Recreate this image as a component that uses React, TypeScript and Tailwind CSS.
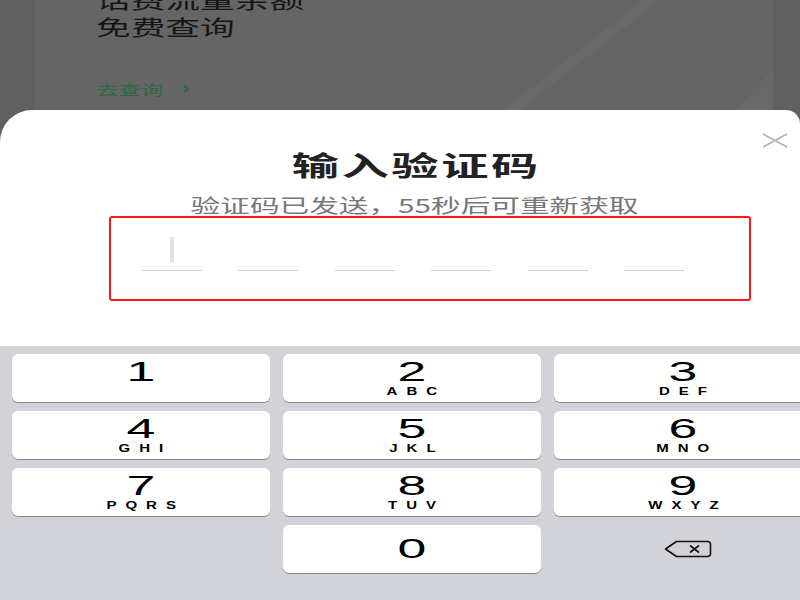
import React from "react";

const cjk = "font-['Noto_Sans_CJK_SC','Noto_Sans',sans-serif]";
const num = "font-['Liberation_Sans','Noto_Sans_CJK_SC',sans-serif]";

type K = { d: string; l?: string };
const rows: K[][] = [
  [{ d: "1" }, { d: "2", l: "ABC" }, { d: "3", l: "DEF" }],
  [{ d: "4", l: "GHI" }, { d: "5", l: "JKL" }, { d: "6", l: "MNO" }],
  [{ d: "7", l: "PQRS" }, { d: "8", l: "TUV" }, { d: "9", l: "WXYZ" }],
];

function Key({ k }: { k: K }) {
  return (
    <div className="h-[48px] bg-white rounded-[6px] shadow-[0_1px_0_#88898c] flex flex-col items-center pt-[4px]">
      <span className={`${num} inline-block text-[28px] leading-[28px] text-black scale-x-[1.85]`}>{k.d}</span>
      {k.l && (
        <span className={`${num} inline-block mt-[1px] text-[10px] leading-[10px] font-bold text-black tracking-[6px] pl-[6px] scale-x-[1.5]`}>
          {k.l}
        </span>
      )}
    </div>
  );
}

export default function App() {
  return (
    <div className="relative w-[800px] h-[600px] overflow-hidden bg-[#606060] flex flex-col">
      {/* dimmed background page */}
      <div className="h-[110px] shrink-0 flex">
        <div className="ml-[35px] w-[738px] h-full bg-[#656565] relative overflow-hidden">
          <svg className="absolute inset-0" width="738" height="110" viewBox="0 0 738 110">
            <polygon points="608,0 625,0 485,110 468,110" fill="#696969" />
            <polygon points="700,110 738,70 738,110" fill="#696969" />
          </svg>
          <div className={`relative ${cjk} pl-[61px] -mt-[14px] flex flex-col items-start`}>
            <span className="inline-block origin-left scale-x-[1.65] text-[21px] leading-[27px] text-[#161616]">话费流量余额</span>
            <span className="inline-block origin-left scale-x-[1.65] text-[21px] leading-[27px] text-[#161616]">免费查询</span>
            <div className="mt-[39px] flex items-center">
              <span className="inline-block origin-left scale-x-[1.6] text-[14px] leading-[20px] text-[#2c6a44]">去查询</span>
              <svg className="ml-[44px]" width="8" height="10" viewBox="0 0 8 10">
                <path d="M2 2 L6 5 L2 8" fill="none" stroke="#2c6a44" strokeWidth="2.2" />
              </svg>
            </div>
          </div>
        </div>
      </div>

      {/* bottom sheet */}
      <div className="relative h-[236px] shrink-0 bg-white rounded-tl-[32px] rounded-tr-[14px] pt-[39px] pl-[30px] flex flex-col items-center">
        <svg className="absolute top-[23px] right-[12px]" width="26" height="15" viewBox="0 0 26 15">
          <path d="M1 1 L25 14 M25 1 L1 14" stroke="#b0b0b0" strokeWidth="1.5" />
        </svg>
        <div className={`${cjk} inline-block scale-x-[1.75] text-[27px] leading-[32px] font-bold text-[#222] tracking-[1.5px] pl-[1.5px]`}>
          输入验证码
        </div>
        <div className={`${cjk} mt-[13px] inline-block scale-x-[1.56] text-[19px] leading-[22px] text-[#777]`}>
          验证码已发送，55秒后可重新获取
        </div>
        <div className="self-start ml-[79px] w-[642px] h-[85px] border-2 border-[#ff1a1a] rounded-[3px] flex items-start pt-[19px] pl-[31px] gap-[36.4px]">
          {[0, 1, 2, 3, 4, 5].map((i) => (
            <div key={i} className="w-[60px] h-[34px] border-b-[1.5px] border-[#cfcfcf] flex justify-center">
              {i === 0 && <div className="w-[4px] h-[25px] bg-[#e2e2e2]" />}
            </div>
          ))}
        </div>
      </div>

      {/* keyboard */}
      <div className="flex-1 bg-[#d1d3d8] pt-[8px] pl-[12px]">
        <div className="grid grid-cols-[258px_258px_258px] gap-x-[13px] gap-y-[9px]">
          {rows.flat().map((k) => (
            <Key key={k.d} k={k} />
          ))}
          <div />
          <div className="h-[48px] bg-white rounded-[6px] shadow-[0_1px_0_#88898c] flex items-center justify-center">
            <span className={`${num} inline-block text-[28px] leading-[28px] text-black scale-x-[1.85]`}>0</span>
          </div>
          <div className="h-[48px] flex items-center justify-center">
            <svg className="ml-[10px]" width="48" height="18" viewBox="0 0 48 18">
              <path d="M1.5 9 L12.5 1.5 H43.5 Q46.5 1.5 46.5 4.5 V13.5 Q46.5 16.5 43.5 16.5 H12.5 Z" fill="none" stroke="#111" strokeWidth="1.6" strokeLinejoin="round" />
              <path d="M26 5.5 L35 12.5 M35 5.5 L26 12.5" stroke="#111" strokeWidth="1.6" />
            </svg>
          </div>
        </div>
      </div>
    </div>
  );
}
